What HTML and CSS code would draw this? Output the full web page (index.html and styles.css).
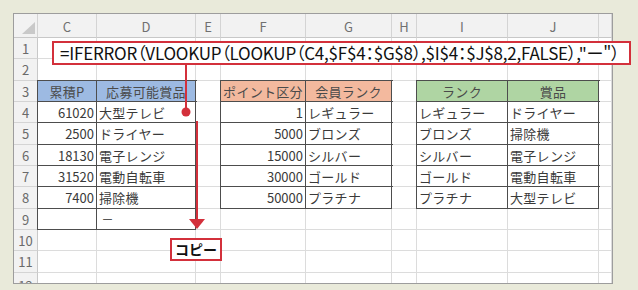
FILE: index.html
```html
<!DOCTYPE html>
<html lang="ja">
<head>
<meta charset="utf-8">
<link rel="stylesheet" href="styles.css">
</head>
<body>
<div class="sheet">
  <div class="grid">
    <div class="corner"><svg width="13" height="12" viewBox="0 0 13 12"><polygon points="13,0 13,12 0,12" fill="#c9c9c9"/></svg></div>
    <div class="ch">C</div><div class="ch">D</div><div class="ch">E</div><div class="ch">F</div><div class="ch">G</div><div class="ch">H</div><div class="ch">I</div><div class="ch">J</div><div class="ch"></div>

    <div class="rh">1</div><div class="c"></div><div class="c"></div><div class="c"></div><div class="c"></div><div class="c"></div><div class="c"></div><div class="c"></div><div class="c"></div><div class="c"></div>
    <div class="rh">2</div><div class="c"></div><div class="c"></div><div class="c"></div><div class="c"></div><div class="c"></div><div class="c"></div><div class="c"></div><div class="c"></div><div class="c"></div>

    <div class="rh">3</div>
    <div class="c t hd blue">累積P</div><div class="c t hd blue">応募可能賞品</div><div class="c"></div>
    <div class="c t hd orange">ポイント区分</div><div class="c t hd orange">会員ランク</div><div class="c"></div>
    <div class="c t hd green">ランク</div><div class="c t hd green">賞品</div><div class="c"></div>

    <div class="rh">4</div>
    <div class="c t num">61020</div><div class="c t">大型テレビ</div><div class="c"></div>
    <div class="c t num">1</div><div class="c t">レギュラー</div><div class="c"></div>
    <div class="c t">レギュラー</div><div class="c t">ドライヤー</div><div class="c"></div>

    <div class="rh">5</div>
    <div class="c t num">2500</div><div class="c t">ドライヤー</div><div class="c"></div>
    <div class="c t num">5000</div><div class="c t">ブロンズ</div><div class="c"></div>
    <div class="c t">ブロンズ</div><div class="c t">掃除機</div><div class="c"></div>

    <div class="rh">6</div>
    <div class="c t num">18130</div><div class="c t">電子レンジ</div><div class="c"></div>
    <div class="c t num">15000</div><div class="c t">シルバー</div><div class="c"></div>
    <div class="c t">シルバー</div><div class="c t">電子レンジ</div><div class="c"></div>

    <div class="rh">7</div>
    <div class="c t num">31520</div><div class="c t">電動自転車</div><div class="c"></div>
    <div class="c t num">30000</div><div class="c t">ゴールド</div><div class="c"></div>
    <div class="c t">ゴールド</div><div class="c t">電動自転車</div><div class="c"></div>

    <div class="rh">8</div>
    <div class="c t num">7400</div><div class="c t">掃除機</div><div class="c"></div>
    <div class="c t num">50000</div><div class="c t">プラチナ</div><div class="c"></div>
    <div class="c t">プラチナ</div><div class="c t">大型テレビ</div><div class="c"></div>

    <div class="rh">9</div>
    <div class="c t"></div><div class="c t dash">ー</div><div class="c"></div><div class="c"></div><div class="c"></div><div class="c"></div><div class="c"></div><div class="c"></div><div class="c"></div>

    <div class="rh">10</div><div class="c"></div><div class="c"></div><div class="c"></div><div class="c"></div><div class="c"></div><div class="c"></div><div class="c"></div><div class="c"></div><div class="c"></div>
    <div class="rh">11</div><div class="c"></div><div class="c"></div><div class="c"></div><div class="c"></div><div class="c"></div><div class="c"></div><div class="c"></div><div class="c"></div><div class="c"></div>
    <div class="rh rh12">12</div><div class="c"></div><div class="c"></div><div class="c"></div><div class="c"></div><div class="c"></div><div class="c"></div><div class="c"></div><div class="c"></div><div class="c"></div>
  </div>
</div>

<div class="formula">=IFERROR（VLOOKUP（LOOKUP（C4,$F$4：$G$8）,$I$4：$J$8,2,FALSE）,"ー"）</div>

<svg class="marks" width="638" height="290" viewBox="0 0 638 290">
  <line x1="186" y1="64" x2="186" y2="110" stroke="#d3303b" stroke-width="2"/>
  <circle cx="186" cy="112" r="4.5" fill="#d3303b"/>
  <line x1="197" y1="121" x2="197" y2="221" stroke="#d3303b" stroke-width="2"/>
  <polygon points="189,219 205,219 197,229" fill="#d3303b"/>
</svg>

<div class="copy">コピー</div>
</body>
</html>
```
FILE: styles.css
```css
html, body {
  margin: 0;
  padding: 0;
}
body {
  width: 638px;
  height: 290px;
  background: #e9eada;
  padding: 13px 0 0 13px;
  box-sizing: border-box;
  font-family: "Noto Sans CJK JP", "Noto Sans", sans-serif;
  position: relative;
  overflow: hidden;
}
.sheet {
  width: 600px;
  height: 271px;
  border: 1px solid #9d9d9d;
  box-sizing: border-box;
  background: #fff;
  overflow: hidden;
}
.grid {
  display: grid;
  grid-template-columns: 24px 59px 99px 25px 85px 86px 25px 91px 91px 13px;
  grid-template-rows: 24px 21px 22px 21px 21px 22px 21px 21px 22px 21px 21px 22px 21px;
}
.grid > div {
  box-sizing: border-box;
  display: flex;
  align-items: center;
  overflow: hidden;
  white-space: nowrap;
}
.corner {
  background: #f2f2f2;
  border-right: 1px solid #d4d4d4;
  border-bottom: 1px solid #c8c8c8;
  justify-content: flex-end;
  align-items: flex-end !important;
  padding: 0 2px 3px 0;
}
.corner svg { display: block; }
.ch {
  background: #f2f2f2;
  border-right: 1px solid #d4d4d4;
  border-bottom: 1px solid #c8c8c8;
  justify-content: center;
  color: #707070;
  font-size: 13px;
  padding-top: 2px;
}
.rh {
  background: #f2f2f2;
  border-right: 1px solid #c8c8c8;
  border-bottom: 1px solid #d4d4d4;
  justify-content: center;
  color: #6a6a6a;
  font-size: 13px;
}
.rh12 {
  align-items: flex-start !important;
  padding-top: 3px;
}
.c {
  background: #fff;
  border-right: 1px solid #dcdcdc;
  border-bottom: 1px solid #dcdcdc;
  color: #3a3a3a;
  font-size: 13px;
  padding-left: 2px;
  letter-spacing: 0.3px;
}
.c.t {
  border-right-color: #4d4d4d;
  border-bottom-color: #4d4d4d;
  box-shadow: 0 0 0 1px #4d4d4d;
}
.num {
  justify-content: flex-end;
  padding: 0 2px 0 0 !important;
  letter-spacing: 0;
}
.hd {
  justify-content: center;
  padding: 0 !important;
  color: #4a4a4a;
}
.blue { background: #9dbae2 !important; }
.orange { background: #f3b99e !important; }
.green { background: #afd5a3 !important; }
.dash {
  padding-left: 5px !important;
  font-size: 11px !important;
  color: #555 !important;
}
.formula {
  position: absolute;
  left: 52px;
  top: 41px;
  width: 579px;
  height: 24px;
  box-sizing: border-box;
  border: 2px solid #d3303b;
  background: #fff;
  color: #111;
  font-size: 17px;
  line-height: 20px;
  padding-left: 6px;
  letter-spacing: -0.22px;
  white-space: nowrap;
  font-feature-settings: "palt" 1;
}
.marks {
  position: absolute;
  left: 0;
  top: 0;
  pointer-events: none;
}
.copy {
  position: absolute;
  left: 170px;
  top: 238px;
  width: 52px;
  height: 23px;
  box-sizing: border-box;
  border: 2px solid #d3303b;
  background: #fff;
  color: #111;
  font-size: 14px;
  font-weight: 700;
  line-height: 19px;
  text-align: center;
}
```
